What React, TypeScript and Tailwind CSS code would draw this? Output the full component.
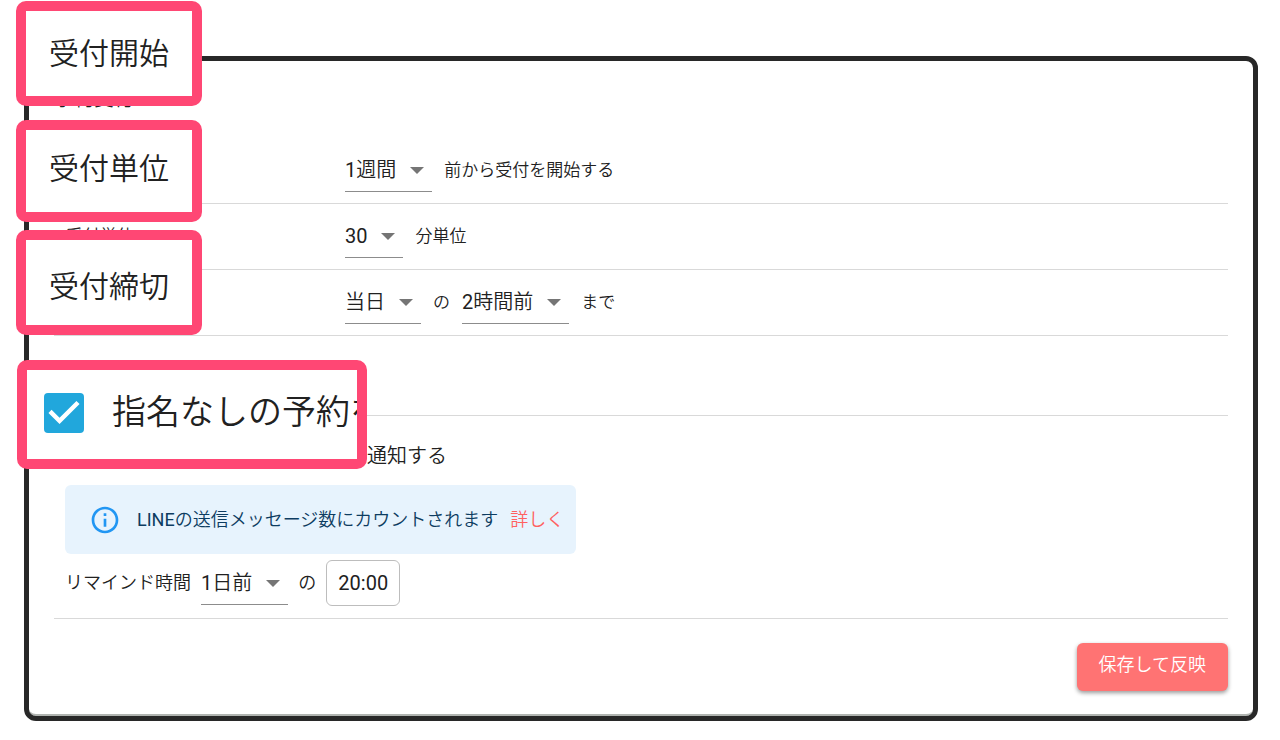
import React from 'react';
import { MdInfoOutline } from 'react-icons/md';

export default function App() {
  return (
    <main className="relative px-6 pt-14 pb-5 pr-[22px] bg-white text-[#212121] font-['Roboto','Noto_Sans_CJK_JP_DemiLight','Noto_Sans_CJK_JP',sans-serif] font-[350]">
      <form
        className="border-5 border-[#282828] rounded-xl px-[25px] pt-6 pb-[25px] shadow-[inset_0_-3px_0_-1px_#b0b4b0]"
        onSubmit={(e) => e.preventDefault()}
      >
        <h2 className="h-7 mb-[25px] text-xl leading-7 font-[350]">予約受付</h2>

        <SettingRow>
          <SelectBox id="start" value="1週間" />
          <span>前から受付を開始する</span>
        </SettingRow>
        <SettingRow label="受付単位" htmlFor="unit">
          <SelectBox id="unit" value="30" />
          <span>分単位</span>
        </SettingRow>
        <SettingRow>
          <SelectBox id="deadline-day" value="当日" />
          <span>の</span>
          <SelectBox id="deadline-time" value="2時間前" label="締切時間" />
          <span>まで</span>
        </SettingRow>

        <div className="h-20 border-b border-[#d9d9d9]" />

        {/* Reminder */}
        <section className="pt-[26px] pb-3 px-[11px] border-b border-[#d9d9d9]">
          <h3 className="pl-[302px] text-xl leading-7 font-[350]">通知する</h3>
          <div className="flex items-center w-fit h-[69px] mt-[15px] pl-6 pr-3 rounded-md bg-[#e7f3fd] text-lg font-light text-[#0d3c61]">
            <MdInfoOutline className="w-8 h-8 mr-4 shrink-0 text-[#2196f3]" />
            <span>
              <span className="font-normal">LINE</span>の送信メッセージ数にカウントされます
            </span>
            <a href="#" className="ml-3 text-[#ff6060]">詳しく</a>
          </div>
          <div className="flex items-center gap-2.5 mt-1.5 text-lg font-light">
            <label htmlFor="remind-day">リマインド時間</label>
            <SelectBox id="remind-day" value="1日前" />
            <span>の</span>
            <input
              type="text"
              aria-label="リマインド時刻"
              defaultValue="20:00"
              className="w-[74px] h-[46px] border border-[#bdbdbd] rounded-md text-center text-xl font-normal"
            />
          </div>
        </section>

        <div className="flex justify-end mt-6">
          <button
            type="submit"
            className="h-12 px-[22px] pb-1 rounded-md bg-[#ff7373] text-lg font-[350] text-white shadow-[0_2px_4px_rgba(0,0,0,0.4)]"
          >
            保存して反映
          </button>
        </div>
      </form>

      {/* Highlights over the form */}
      <Highlight htmlFor="start" className="top-px h-[105px]">受付開始</Highlight>
      <Highlight htmlFor="unit" className="top-[120px] h-[102px] pb-1">受付単位</Highlight>
      <Highlight htmlFor="deadline-day" className="top-[230px] h-[105px] pt-2">受付締切</Highlight>
      <label className="absolute left-[17px] top-[360px] w-[350px] h-[109px] flex items-center pl-[17px] pb-1 border-10 border-[#ff4774] rounded-[10px] bg-white overflow-hidden whitespace-nowrap text-[34px]">
        <span className="relative w-10 h-10 mr-7 shrink-0">
          <input
            type="checkbox"
            defaultChecked
            className="peer block w-10 h-10 appearance-none rounded border-2 border-gray-500 checked:border-0 checked:bg-[#21a7dc]"
          />
          <svg viewBox="3 3 18 18" className="absolute inset-0 hidden peer-checked:block pointer-events-none">
            <path fill="#fff" d="M10 17l-5-5 1.41-1.41L10 14.17l7.59-7.59L19 8z" />
          </svg>
        </span>
        指名なしの予約を
      </label>
    </main>
  );
}

const SettingRow: React.FC<{ label?: string; htmlFor?: string; children: React.ReactNode }> = ({
  label,
  htmlFor,
  children,
}) => (
  <div className="grid grid-cols-[291px_1fr] items-center h-[66px] border-b border-[#d9d9d9] text-[17px] font-light">
    <div className="pl-3">{label && <label htmlFor={htmlFor}>{label}</label>}</div>
    <div className="flex items-center gap-3">{children}</div>
  </div>
);

const SelectBox: React.FC<{ id: string; value: string; label?: string }> = ({ id, value, label }) => (
  <span className="relative">
    <select
      id={id}
      aria-label={label}
      defaultValue={value}
      className="block appearance-none field-sizing-content h-[43px] pr-9 border-b border-[#8c8c8c] bg-transparent text-xl font-normal"
    >
      <option>{value}</option>
    </select>
    <svg
      viewBox="0 0 14 7"
      className="absolute right-2 top-[18px] w-3.5 h-[7px] text-[#757575] pointer-events-none"
      fill="currentColor"
    >
      <path d="M0 0h14L7 7z" />
    </svg>
  </span>
);

const Highlight: React.FC<{ htmlFor: string; className: string; children: React.ReactNode }> = ({
  htmlFor,
  className,
  children,
}) => (
  <label
    htmlFor={htmlFor}
    className={`absolute left-4 w-[186px] flex items-center justify-center border-10 border-[#ff4774] rounded-[10px] bg-white text-3xl ${className}`}
  >
    {children}
  </label>
);
